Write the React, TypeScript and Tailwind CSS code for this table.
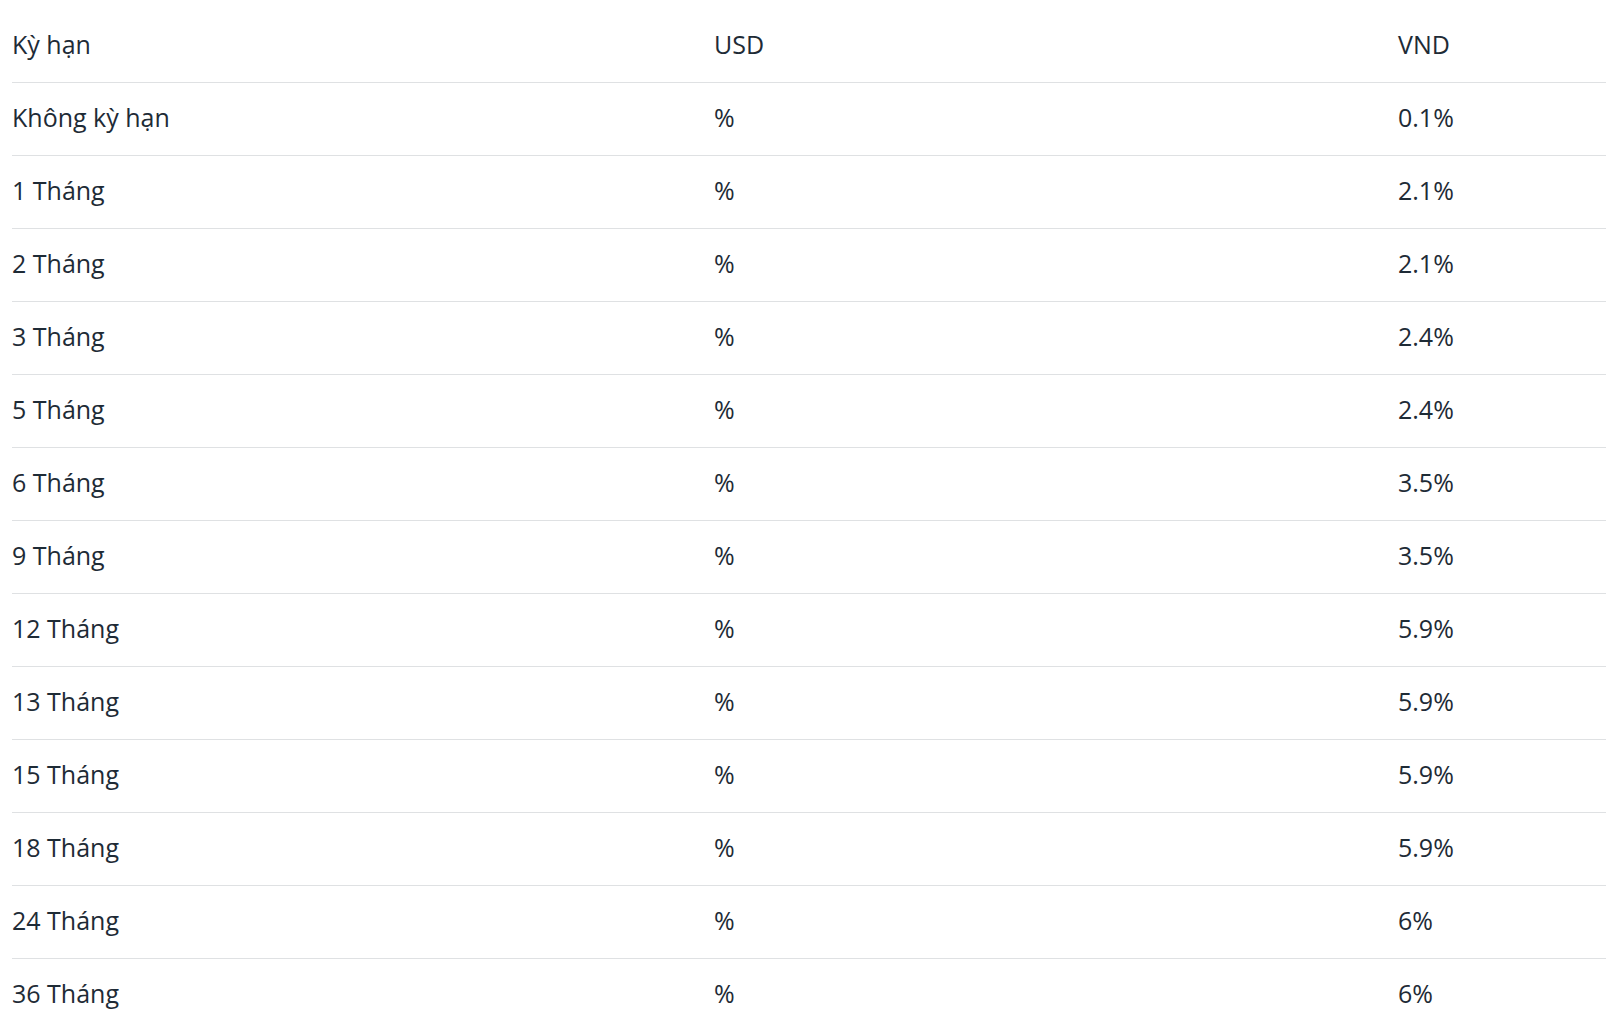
const rows: [string, string, string][] = [
  ["Không kỳ hạn", "%", "0.1%"],
  ["1 Tháng", "%", "2.1%"],
  ["2 Tháng", "%", "2.1%"],
  ["3 Tháng", "%", "2.4%"],
  ["5 Tháng", "%", "2.4%"],
  ["6 Tháng", "%", "3.5%"],
  ["9 Tháng", "%", "3.5%"],
  ["12 Tháng", "%", "5.9%"],
  ["13 Tháng", "%", "5.9%"],
  ["15 Tháng", "%", "5.9%"],
  ["18 Tháng", "%", "5.9%"],
  ["24 Tháng", "%", "6%"],
  ["36 Tháng", "%", "6%"],
];

function Row({ cells, last }: { cells: [string, string, string]; last?: boolean }) {
  return (
    <div
      className={`grid grid-cols-[702px_684px_1fr] h-[73px] items-center pb-[3px] ${
        last ? "" : "border-b border-[#dfe1e3]"
      }`}
    >
      {cells.map((c, i) => (
        <div key={i} className="whitespace-nowrap">
          {c}
        </div>
      ))}
    </div>
  );
}

export default function App() {
  return (
    <div
      className="bg-white min-h-screen pl-[12px] pt-[10px] text-[25px] text-[#1e2b36]"
      style={{ fontFamily: "'Open Sans', 'Noto Sans', sans-serif" }}
    >
      <Row cells={["Kỳ hạn", "USD", "VND"]} />
      {rows.map((r, i) => (
        <Row key={i} cells={r} last={i === rows.length - 1} />
      ))}
    </div>
  );
}
